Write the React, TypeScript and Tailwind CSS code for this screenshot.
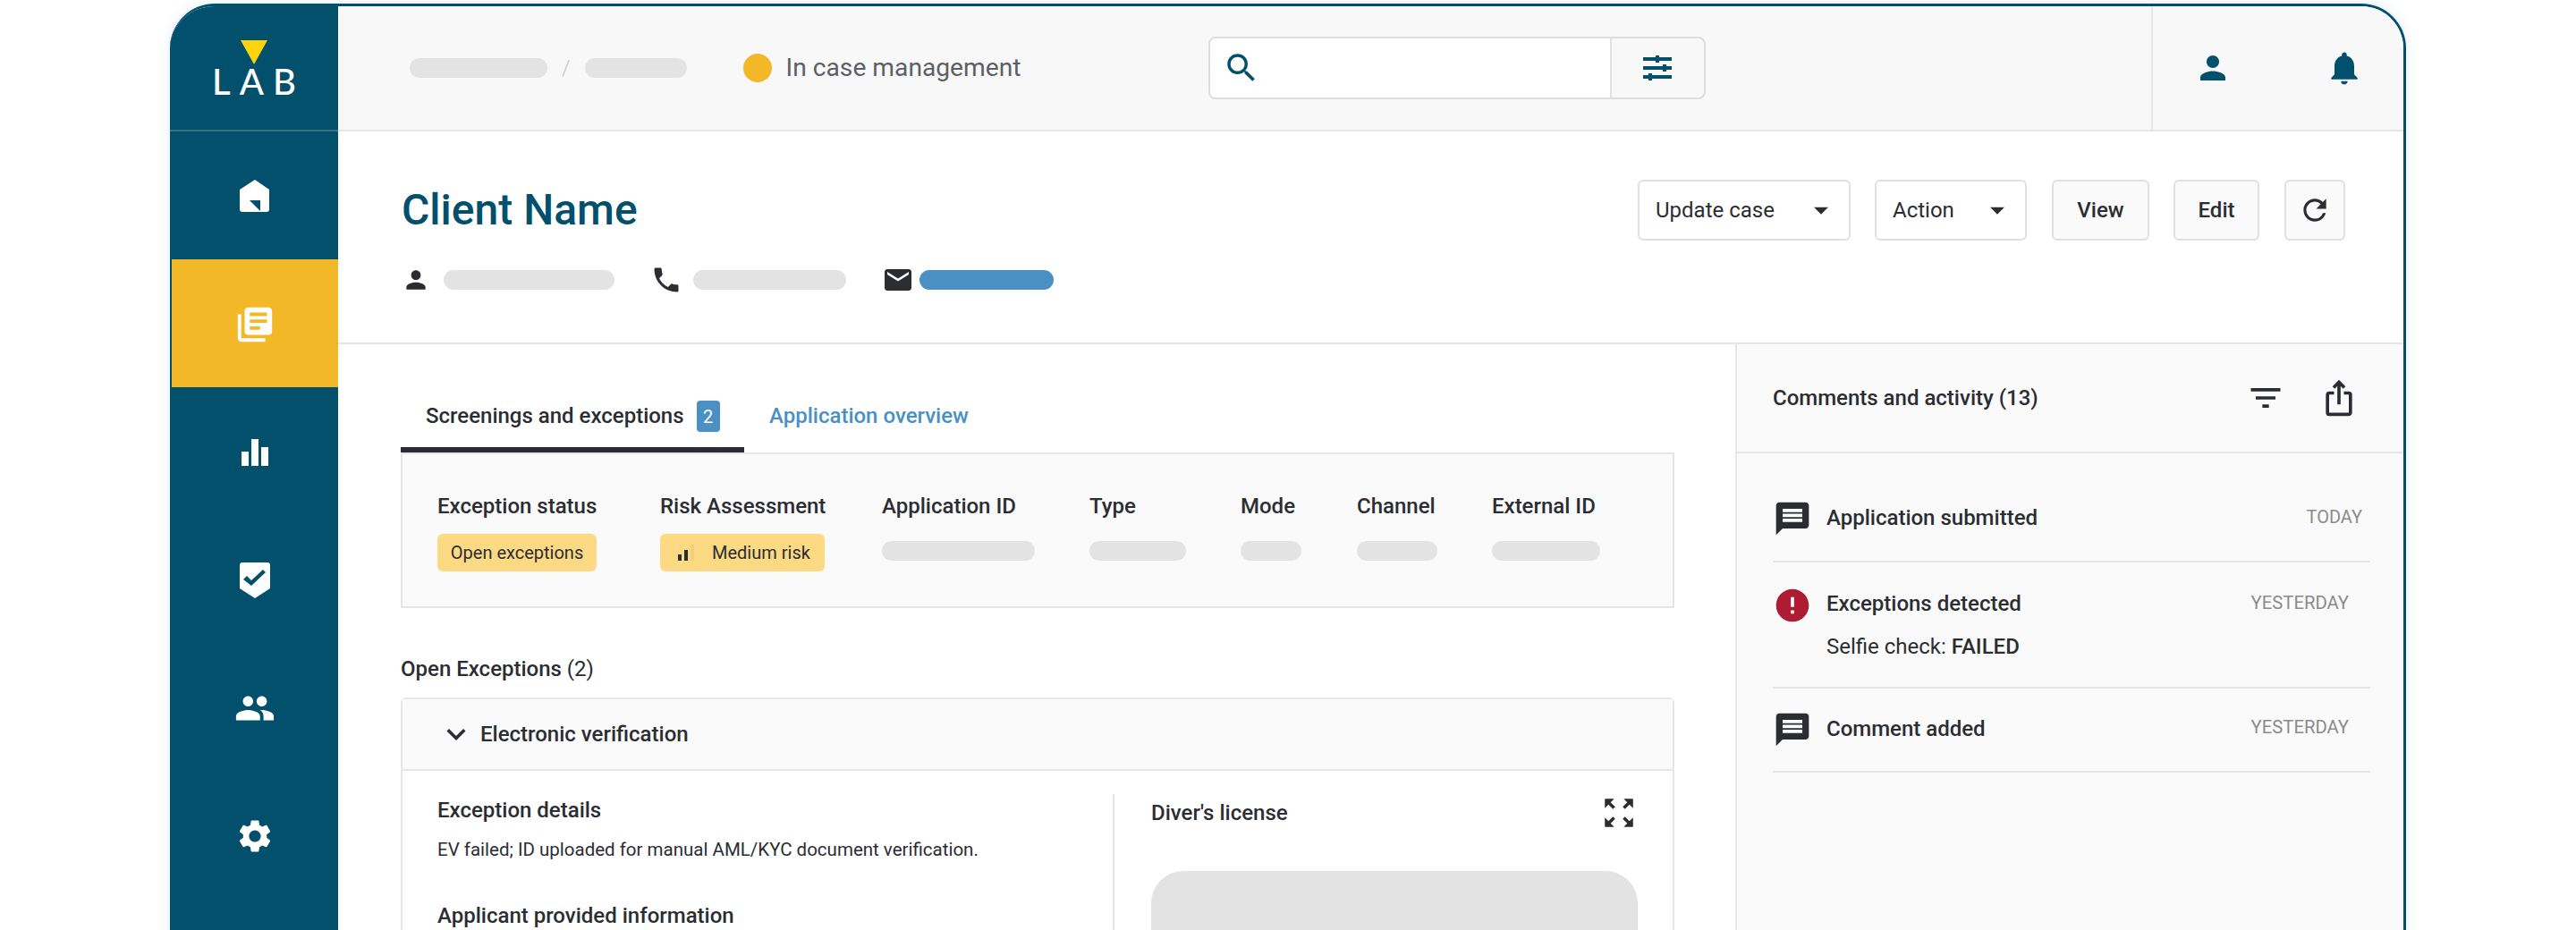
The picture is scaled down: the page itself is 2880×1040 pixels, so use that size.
import {
  MdArrowDropDown,
  MdEmail,
  MdError,
  MdExpandMore,
  MdFilterList,
  MdIosShare,
  MdLibraryBooks,
  MdMessage,
  MdNotifications,
  MdPeople,
  MdPerson,
  MdPhone,
  MdRefresh,
  MdSearch,
  MdSettings,
  MdZoomOutMap,
} from "react-icons/md";

const font = { fontFamily: "Roboto, sans-serif" };

function HomeIcon() {
  return (
    <svg width="34" height="38" viewBox="0 0 34 38" fill="#fff">
      <path
        fillRule="evenodd"
        d="M17 0 33 11V33a3 3 0 0 1-3 3H3a3 3 0 0 1-3-3V11ZM11 23 23 35V23Z"
      />
    </svg>
  );
}

function ChartIcon() {
  return (
    <svg width="30" height="30" viewBox="0 0 30 30" fill="#fff">
      <rect x="0" y="14" width="8" height="16" />
      <rect x="11" y="0" width="8" height="30" />
      <rect x="22" y="9" width="8" height="21" />
    </svg>
  );
}

function ShieldIcon() {
  return (
    <svg width="34" height="40" viewBox="0 0 34 40" fill="#fff">
      <path
        fillRule="evenodd"
        d="M3 0H31a3 3 0 0 1 3 3V29L17 40 0 29V3a3 3 0 0 1 3-3ZM4 19 8 15 13 20 26 8 29 11 13 26Z"
      />
    </svg>
  );
}

function SlidersIcon() {
  return (
    <svg width="32" height="28" viewBox="0 0 32 28" fill="#03506c">
      <rect x="0" y="2" width="32" height="4" />
      <rect x="14" y="0" width="4" height="8" />
      <rect x="0" y="12" width="32" height="4" />
      <rect x="22" y="10" width="4" height="8" />
      <rect x="0" y="22" width="32" height="4" />
      <rect x="6" y="20" width="4" height="8" />
    </svg>
  );
}

function Pill({ className }: { className: string }) {
  return <div className={`h-[22px] rounded-full bg-[#e3e3e3] ${className}`} />;
}

const navItems = [
  { icon: <HomeIcon />, active: false },
  { icon: <MdLibraryBooks size={46} color="#fff" />, active: true },
  { icon: <ChartIcon />, active: false },
  { icon: <ShieldIcon />, active: false },
  { icon: <MdPeople size={46} color="#fff" />, active: false },
  { icon: <MdSettings size={44} color="#fff" />, active: false },
];

const summary = [
  { label: "Exception status", w: "w-[249px]" },
  { label: "Risk Assessment", w: "w-[248px]" },
  { label: "Application ID", w: "w-[232px]", pill: "w-[171px]" },
  { label: "Type", w: "w-[169px]", pill: "w-[108px]" },
  { label: "Mode", w: "w-[130px]", pill: "w-[68px]" },
  { label: "Channel", w: "w-[151px]", pill: "w-[90px]" },
  { label: "External ID", w: "w-[121px]", pill: "w-[121px]" },
];

export default function App() {
  return (
    <div className="h-[1040px] overflow-hidden bg-white pt-[4px] px-[190px] text-[#2b2d33]" style={font}>
      <div className="flex h-[1100px] overflow-hidden rounded-t-[50px] border-t-[3px] border-r-[3px] border-[#03506c] bg-white shadow-[0_0_14px_rgba(60,130,220,0.15)]">
        {/* Sidebar */}
        <aside className="w-[188px] shrink-0 bg-[#03506c]">
          <div className="flex h-[140px] flex-col items-center border-b-2 border-[#3a7189] pt-[38px]">
            <svg width="30" height="27" viewBox="0 0 30 27">
              <path d="M0 0H30L15 27Z" fill="#fbd40f" />
            </svg>
            <span
              className="-mt-[1px] ml-[10px] text-[40px] font-medium leading-[40px] tracking-[10px] text-white"
              style={{ fontFamily: "Lato, sans-serif" }}
            >
              LAB
            </span>
          </div>
          {navItems.map((item, i) => (
            <div
              key={i}
              className={`flex h-[143px] items-center justify-center border-l-2 border-[#03506c] pt-[3px] ${item.active ? "bg-[#f2b827]" : ""}`}
            >
              {item.icon}
            </div>
          ))}
        </aside>

        <div className="min-w-0 flex-1">
          {/* Top bar */}
          <header className="flex h-[140px] items-center border-b-2 border-[#e6e6e6] bg-[#f8f8f8] pl-[80px]">
            <Pill className="w-[154px]" />
            <span className="mx-[16px] text-[24px] font-light text-[#c4c4c4]">/</span>
            <Pill className="w-[114px]" />
            <span className="ml-[63px] h-[32px] w-[32px] rounded-full bg-[#f2b827]" />
            <span className="ml-[16px] text-[28.2px] text-[#5d5f66]">In case management</span>

            <div className="ml-[209px] flex h-[70px] w-[556px] overflow-hidden rounded-[8px] border-2 border-[#dedede]">
              <div className="flex w-[449px] items-center border-r-2 border-[#e3e3e3] bg-white pl-[14px]">
                <MdSearch size={42} color="#03506c" />
              </div>
              <div className="flex flex-1 items-center justify-center">
                <SlidersIcon />
              </div>
            </div>

            <div className="ml-[498px] flex h-full flex-1 items-center border-l-2 border-[#e6e6e6] pl-[46px]">
              <MdPerson size={42} color="#03506c" />
              <span className="ml-[104px]">
                <MdNotifications size={44} color="#03506c" />
              </span>
            </div>
          </header>

          {/* Client header */}
          <section className="flex h-[238px] items-start justify-between border-b-2 border-[#e6e6e6] pl-[71px] pr-[65px]">
            <div>
              <h1 className="mt-[54px] text-[48px] font-medium leading-[68px] text-[#03506c]">Client Name</h1>
              <div className="mt-[26px] flex items-center">
                <MdPerson size={32} />
                <Pill className="ml-[15px] w-[191px]" />
                <span className="ml-[40px]">
                  <MdPhone size={36} />
                </span>
                <Pill className="ml-[12px] w-[171px]" />
                <span className="ml-[40px]">
                  <MdEmail size={36} />
                </span>
                <Pill className="ml-[6px] w-[150px] !bg-[#4a90c4]" />
              </div>
            </div>
            <div className="mt-[54px] flex gap-[28px] text-[24px]">
              <button className="flex h-[68px] w-[238px] items-center justify-between rounded-[6px] border-2 border-[#e0e0e0] pl-[18px] pr-[12px]">
                Update case <MdArrowDropDown size={38} />
              </button>
              <button className="-ml-[1px] flex h-[68px] w-[170px] items-center justify-between rounded-[6px] border-2 border-[#e0e0e0] pl-[18px] pr-[12px]">
                Action <MdArrowDropDown size={38} />
              </button>
              <button className="h-[68px] w-[109px] rounded-[6px] border-2 border-[#e0e0e0] bg-[#fafafa] font-medium">
                View
              </button>
              <button className="-ml-[1px] h-[68px] w-[96px] rounded-[6px] border-2 border-[#e0e0e0] bg-[#fafafa] font-medium">
                Edit
              </button>
              <button className="flex h-[68px] w-[68px] items-center justify-center rounded-[6px] border-2 border-[#e0e0e0] bg-[#fafafa]">
                <MdRefresh size={38} />
              </button>
            </div>
          </section>

          <div className="flex">
            {/* Main column */}
            <main className="w-[1564px] shrink-0 border-r-2 border-[#e6e6e6] pl-[70px] pr-[68px]">
              <div className="flex h-[121px] items-end text-[24px] font-medium">
                <div className="flex h-[77px] w-[384px] items-start border-b-[6px] border-[#2b2d33] pl-[28px] pt-[19px]">
                  <span className="leading-[35px]">Screenings and exceptions</span>
                  <span className="ml-[14px] flex h-[35px] w-[26px] items-center justify-center rounded-[4px] bg-[#4a90c4] text-[20px] font-normal text-white">
                    2
                  </span>
                </div>
                <span className="ml-[28px] h-[77px] pt-[19px] leading-[35px] text-[#4a90c4]">Application overview</span>
              </div>

              <div className="flex h-[174px] border-2 border-[#e6e6e6] bg-[#fafafa] pl-[39px] pt-[40px]">
                {summary.map((s) => (
                  <div key={s.label} className={`${s.w} shrink-0`}>
                    <div className="text-[24px] font-medium leading-[36px] whitespace-nowrap">{s.label}</div>
                    {s.label === "Exception status" && (
                      <div className="mt-[13px] flex h-[42px] w-[178px] items-center justify-center rounded-[6px] bg-[#fcd983] text-[20px]">
                        Open exceptions
                      </div>
                    )}
                    {s.label === "Risk Assessment" && (
                      <div className="mt-[13px] flex h-[42px] w-[184px] items-center rounded-[6px] bg-[#fcd983] pl-[20px] text-[20px]">
                        <svg width="18" height="18" viewBox="0 0 18 18" className="mr-[20px]">
                          <rect x="0" y="11" width="4" height="7" fill="#2b2d33" />
                          <rect x="7" y="6" width="4" height="12" fill="#2b2d33" />
                          <rect x="14" y="0" width="4" height="18" fill="#f3cf80" />
                        </svg>
                        Medium risk
                      </div>
                    )}
                    {s.pill && <Pill className={`mt-[21px] ${s.pill}`} />}
                  </div>
                ))}
              </div>

              <div className="mt-[50px] text-[24px] leading-[36px]">
                <span className="font-medium">Open Exceptions</span> (2)
              </div>

              <div className="mt-[14px] rounded-t-[6px] border-x-2 border-t-2 border-[#e6e6e6]">
                <div className="flex h-[80px] items-center border-b-2 border-[#e6e6e6] bg-[#fafafa] pl-[39px] text-[24px] font-medium">
                  <MdExpandMore size={42} />
                  <span className="ml-[6px]">Electronic verification</span>
                </div>
                <div className="flex pt-[26px]">
                  <div className="w-[794px] shrink-0 pl-[39px]">
                    <div className="text-[24px] font-medium leading-[36px]">Exception details</div>
                    <p className="mt-[11px] text-[20.5px] leading-[30px]">
                      EV failed; ID uploaded for manual AML/KYC document verification.
                    </p>
                    <div className="mt-[45px] text-[24px] font-medium leading-[28px]">Applicant provided information</div>
                  </div>
                  <div className="h-[300px] flex-1 border-l-2 border-[#e6e6e6] pl-[41px] pr-[39px]">
                    <div className="flex items-center justify-between">
                      <span className="text-[24px] font-medium leading-[36px]">Diver's license</span>
                      <MdZoomOutMap size={42} />
                    </div>
                    <div className="mt-[44px] h-[200px] rounded-[36px] bg-[#e3e3e3]" />
                  </div>
                </div>
              </div>
            </main>

            {/* Activity column */}
            <aside className="min-w-0 flex-1 bg-[#fafafa]">
              <div className="flex h-[122px] items-center border-b-2 border-[#e6e6e6] pl-[40px] pr-[50px]">
                <span className="flex-1 text-[24px] font-medium">Comments and activity (13)</span>
                <MdFilterList size={44} />
                <span className="ml-[38px]">
                  <MdIosShare size={44} />
                </span>
              </div>
              <div className="pl-[40px] pr-[37px] pt-[51px]">
                <div className="flex h-[71px] items-start border-b-2 border-[#e6e6e6]">
                  <MdMessage size={44} className="shrink-0" />
                  <span className="ml-[16px] mt-[3px] flex-1 text-[24px] font-medium leading-[36px]">Application submitted</span>
                  <span className="mr-[9px] mt-[4px] text-[20px] leading-[32px] text-[#8b8b8b]">TODAY</span>
                </div>
                <div className="flex h-[141px] items-start border-b-2 border-[#e6e6e6] pt-[26px]">
                  <MdError size={44} color="#ad1c30" className="shrink-0" />
                  <div className="ml-[16px] flex-1">
                    <div className="mt-[2px] text-[24px] font-medium leading-[36px]">Exceptions detected</div>
                    <div className="mt-[12px] text-[24px] leading-[36px]">
                      Selfie check: <span className="font-medium">FAILED</span>
                    </div>
                  </div>
                  <span className="mr-[24px] mt-[3px] text-[20.3px] leading-[32px] text-[#8b8b8b]">YESTERDAY</span>
                </div>
                <div className="flex h-[94px] items-start border-b-2 border-[#e6e6e6] pt-[24px]">
                  <MdMessage size={44} className="shrink-0" />
                  <span className="ml-[16px] mt-[3px] flex-1 text-[24px] font-medium leading-[36px]">Comment added</span>
                  <span className="mr-[24px] mt-[3px] text-[20.3px] leading-[32px] text-[#8b8b8b]">YESTERDAY</span>
                </div>
              </div>
            </aside>
          </div>
        </div>
      </div>
    </div>
  );
}
